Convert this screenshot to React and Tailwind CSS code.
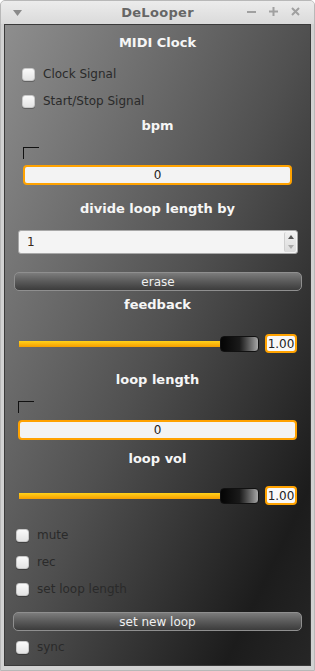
const font = { fontFamily: '"DejaVu Sans", Verdana, sans-serif' }

const Title = ({ children, className = '' }) => (
  <div className={`flex justify-center text-[13px] leading-4 font-bold text-[#f6f6f6] ${className}`}>
    {children}
  </div>
)

const Check = ({ label, className = '' }) => (
  <div className={`flex items-center gap-2 ${className}`}>
    <div className="w-[13px] h-[13px] rounded-[3px] border border-[#c8c8c8] bg-gradient-to-b from-[#fafafa] to-[#e4e4e4] shadow-[0_1px_0_rgba(0,0,0,0.25)]" />
    <span className="text-[12px] leading-4 text-[#2a2a2a]">{label}</span>
  </div>
)

const Marker = ({ className = '' }) => (
  <div className={`w-[16px] h-[12px] border-t border-l border-[#111] ${className}`} />
)

const OrangeBox = ({ className = '' }) => (
  <div className={`h-[20px] rounded-[4px] border-2 border-[#ffa200] bg-[#f3f3f3] flex items-center justify-center text-[12px] text-[#222] ${className}`}>
    0
  </div>
)

const Button = ({ label, className = '' }) => (
  <div className={`h-[19px] rounded-[5px] border border-[#8f8f8f] bg-gradient-to-b from-[#7c7c7c] via-[#5a5a5a] to-[#3c3c3c] flex items-center justify-center text-[12px] text-[#f0f0f0] ${className}`}>
    {label}
  </div>
)

const Slider = () => (
  <div className="h-[19px] flex items-center ml-[14px]">
    <div className="w-[201px] h-[6px] bg-gradient-to-b from-[#ffd21a] to-[#f59d00]" />
    <div className="w-[39px] h-[16px] rounded-[4px] bg-gradient-to-r from-[#050505] via-[#1a1a1a] to-[#a8a8a8] border border-[#111]" />
    <div className="ml-[6px] w-[32px] h-[19px] rounded-[4px] border-2 border-[#ffa200] bg-[#f8f8f8] flex items-center justify-center text-[12px] text-[#222]">
      1.00
    </div>
  </div>
)

export default function App() {
  return (
    <div style={font} className="w-[315px] h-[671px] flex flex-col bg-[#d2d2d2] rounded-t-[5px] border border-[#b8b8b8] overflow-hidden">
      <div className="h-[23px] shrink-0 relative flex items-center justify-center bg-gradient-to-b from-[#ececec] to-[#dadada]">
        <svg className="absolute left-[12px] top-[9px]" width="9" height="6" viewBox="0 0 9 6">
          <polygon points="0,0 9,0 4.5,6" fill="#8a8a8a" />
        </svg>
        <span className="text-[13px] font-bold text-[#666] tracking-[0.3px]">DeLooper</span>
        <div className="absolute right-[14px] top-[6px] flex items-center gap-[13px] text-[#a0a0a0]">
          <svg width="9" height="9" viewBox="0 0 9 9"><rect x="0" y="4" width="9" height="2" fill="#a0a0a0" /></svg>
          <svg width="9" height="9" viewBox="0 0 9 9"><rect x="0" y="3.5" width="9" height="2" fill="#a0a0a0" /><rect x="3.5" y="0" width="2" height="9" fill="#a0a0a0" /></svg>
          <svg width="9" height="9" viewBox="0 0 9 9"><path d="M1 1 L8 8 M8 1 L1 8" stroke="#a0a0a0" strokeWidth="2" /></svg>
        </div>
      </div>
      <div className="flex-1 mx-[3px] mb-[4px] border border-[#3a3a3a] bg-[linear-gradient(to_bottom_right,#8e8e8e_0%,#505050_50%,#1c1c1c_86%,#262626_100%)] flex flex-col">
        <Title className="h-[36px] items-center">MIDI Clock</Title>
        <Check label="Clock Signal" className="h-[26px] ml-[17px]" />
        <Check label="Start/Stop Signal" className="h-[28px] ml-[17px]" />
        <Title className="h-[22px] items-center">bpm</Title>
        <div className="h-[28px]"><Marker className="mt-[10px] ml-[18px]" /></div>
        <OrangeBox className="ml-[18px] w-[269px]" />
        <Title className="h-[45px] pt-[16px]">divide loop length by</Title>
        <div className="ml-[13px] w-[280px] h-[24px] rounded-[3px] border border-[#a8a8a8] bg-[#f4f4f4] flex">
          <div className="flex-1 flex items-center pl-[8px] text-[12px] text-[#3a2a1a]">1</div>
          <div className="w-[12px] my-[1px] mr-[1px] rounded-[2px] border-l border-[#cfcfcf] bg-gradient-to-b from-[#f0f0f0] to-[#dcdcdc] flex flex-col items-center justify-center gap-[6px]">
            <svg width="6" height="4" viewBox="0 0 6 4"><polygon points="3,0 6,4 0,4" fill="#555" /></svg>
            <svg width="6" height="4" viewBox="0 0 6 4"><polygon points="0,0 6,0 3,4" fill="#aaa" /></svg>
          </div>
        </div>
        <div className="h-[18px]" />
        <Button label="erase" className="ml-[9px] w-[288px]" />
        <Title className="h-[43px] pt-[6px]">feedback</Title>
        <Slider />
        <Title className="h-[38px] pt-[19px]">loop length</Title>
        <div className="h-[29px]"><Marker className="mt-[10px] ml-[13px]" /></div>
        <OrangeBox className="ml-[13px] w-[279px]" />
        <Title className="h-[46px] pt-[11px]">loop vol</Title>
        <Slider />
        <div className="h-[16px]" />
        <Check label="mute" className="h-[28px] ml-[11px]" />
        <Check label="rec" className="h-[26px] ml-[11px]" />
        <Check label="set loop length" className="h-[28px] ml-[11px]" />
        <div className="h-[9px]" />
        <Button label="set new loop" className="ml-[8px] w-[289px]" />
        <Check label="sync" className="h-[32px] ml-[11px]" />
      </div>
    </div>
  )
}
